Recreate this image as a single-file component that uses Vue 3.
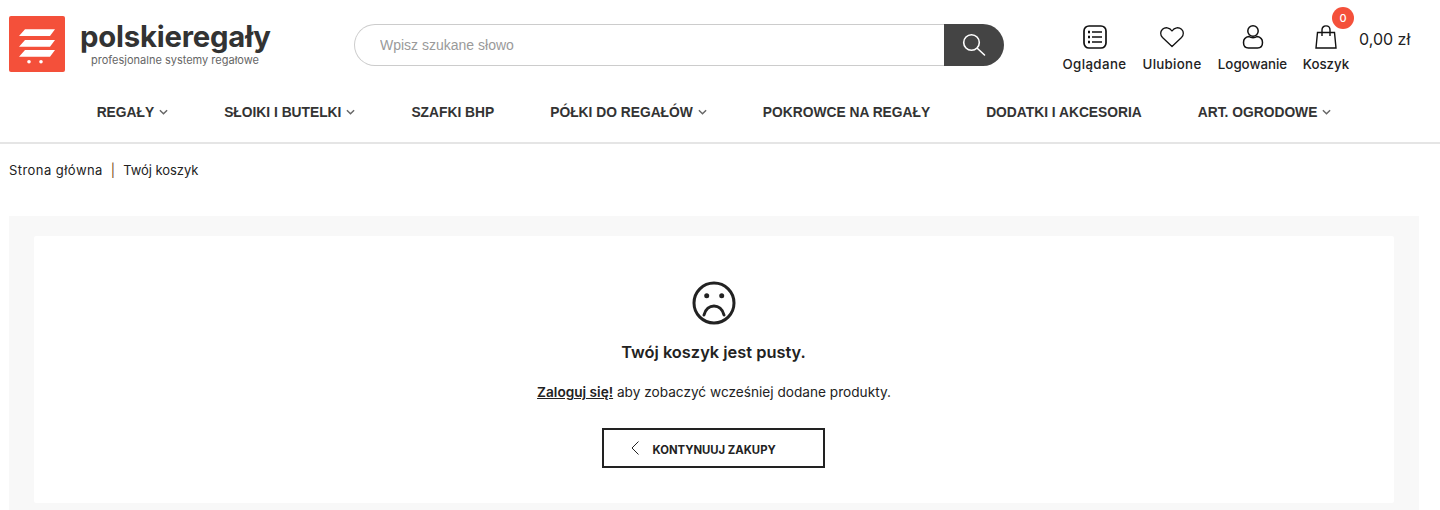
<script setup>
const navItems = [
  { label: 'Regały', arrow: true },
  { label: 'Słoiki i butelki', arrow: true },
  { label: 'Szafki BHP', arrow: false },
  { label: 'Półki do regałów', arrow: true },
  { label: 'Pokrowce na regały', arrow: false },
  { label: 'Dodatki i akcesoria', arrow: false },
  { label: 'Art. ogrodowe', arrow: true }
]
</script>

<template>
  <div class="page">
    <header class="top">
      <a class="logo">
        <svg class="logo-mark" width="56" height="56" viewBox="0 0 56 56">
          <rect width="56" height="56" rx="2" fill="#f4503a" />
          <path d="M16 13.300H46L41 20H10Z M16 24H46L41 30.700H10Z M16 34H46L41 40.700H10Z" fill="#fff" />
          <circle cx="20" cy="45.700" r="1.800" fill="#fff" />
          <circle cx="32" cy="45.700" r="1.800" fill="#fff" />
        </svg>
        <div class="logo-text">
          <div class="logo-name">polskieregały</div>
          <div class="logo-sub">profesjonalne systemy regałowe</div>
        </div>
      </a>

      <div class="search">
        <input class="search-input" placeholder="Wpisz szukane słowo" />
        <button class="search-btn">
          <svg width="24" height="24" viewBox="0 0 24 24" fill="none" stroke="#fff" stroke-width="1.600" stroke-linecap="round">
            <circle cx="9.500" cy="9.500" r="7.800" />
            <path d="M15.500 15.500L22.500 22" />
          </svg>
        </button>
      </div>

      <div class="actions">
        <a class="action seen">
          <svg width="24" height="24" viewBox="0 0 24 24" fill="none" stroke="#111" stroke-width="1.700">
            <rect x="1" y="1" width="22" height="22" rx="5" />
            <path d="M9 7H19M9 12H19M9 17H19" />
            <path d="M5 7H7M5 12H7M5 17H7" stroke-width="2.400" />
          </svg>
          <span>Oglądane</span>
        </a>
        <a class="action fav">
          <svg width="24" height="24" viewBox="0 0 24 24" fill="none" stroke="#111" stroke-width="1.300" stroke-linejoin="round">
            <path d="M12 21.500L2.500 12.500C0 10 .2 6.500 2.500 4.300C5 2 9.500 2 12 6C14.500 2 19 2 21.500 4.300C23.800 6.500 24 10 21.500 12.500Z" />
          </svg>
          <span>Ulubione</span>
        </a>
        <a class="action login">
          <svg width="24" height="24" viewBox="0 0 24 24" fill="none" stroke="#111" stroke-width="1.500">
            <circle cx="12" cy="6" r="5.200" />
            <path d="M8 11.500C10 13 14 13 16 11.500C19.500 12 21.500 14.500 21.500 17.500C21.500 21 19.500 23 16.500 23H7.500C4.500 23 2.500 21 2.500 17.500C2.500 14.500 4.500 12 8 11.500Z" />
          </svg>
          <span>Logowanie</span>
        </a>
        <a class="action cart">
          <svg width="24" height="24" viewBox="0 0 24 24" fill="none" stroke="#111" stroke-width="1.400">
            <path d="M3.500 7.500H20.500L22 23H2Z" />
            <path d="M8 11V5C8 -.5 16 -.5 16 5V11" />
          </svg>
          <span>Koszyk</span>
          <b class="badge">0</b>
        </a>
        <div class="price">0,00 zł</div>
      </div>
    </header>

    <nav class="nav">
      <a v-for="item in navItems" :key="item.label" class="nav-item">
        {{ item.label }}
        <svg v-if="item.arrow" width="9" height="6" viewBox="0 0 10 6" fill="none" stroke="#666" stroke-width="1.600">
          <path d="M1 1L5 5L9 1" />
        </svg>
      </a>
    </nav>

    <div class="crumbs">
      <a class="home">Strona główna</a>
      <i>|</i>
      <a class="here">Twój koszyk</a>
    </div>

    <main class="panel">
      <section class="card">
        <svg class="sad" width="46" height="46" viewBox="0 0 46 46" fill="none" stroke="#222" stroke-width="3">
          <circle cx="23" cy="23" r="20" />
          <path d="M13 35C16 23 30 23 33 35" stroke-linecap="round" />
          <circle cx="15.700" cy="15.700" r="2.500" fill="#222" stroke="none" />
          <circle cx="30.700" cy="15.700" r="2.500" fill="#222" stroke="none" />
        </svg>
        <h2 class="title">Twój koszyk jest pusty.</h2>
        <p class="note"><a>Zaloguj się!</a> aby zobaczyć wcześniej dodane produkty.</p>
        <a class="back">
          <svg width="8" height="14" viewBox="0 0 8 14" fill="none" stroke="#222" stroke-width="1">
            <path d="M7.500 .5L1 7L7.500 13.500" />
          </svg>
          <span>KONTYNUUJ ZAKUPY</span>
        </a>
      </section>
    </main>
  </div>
</template>

<style>
  html, body {
    margin: 0;
    background: #fff;
    overflow: hidden;
  }
</style>

<style scoped>
  .page {
    height: 510px;
    overflow: hidden;
    font-family: Inter, "Noto Sans", sans-serif;
    color: #222;
  }

  .top {
    display: flex;
    align-items: flex-start;
    padding: 16px 0 0 9px;
    height: 72px;
  }

  .logo {
    display: flex;
    gap: 15px;
    width: 345px;
    flex: none;
  }

  .logo-mark {
    flex: none;
  }

  .logo-text {
    text-align: center;
    width: 190px;
  }

  .logo-name {
    font-size: 29.300px;
    line-height: 36px;
    margin-top: 3px;
    font-weight: 700;
    color: #333;
    letter-spacing: -.2px;
    white-space: nowrap;
  }

  .logo-sub {
    font-size: 11px;
    line-height: 13px;
    color: #666;
    white-space: nowrap;
    margin-top: -1px;
  }

  .search {
    display: flex;
    width: 650px;
    height: 42px;
    margin-top: 8px;
    flex: none;
  }

  .search-input {
    flex: 1;
    min-width: 0;
    box-sizing: border-box;
    border: 1px solid #ccc;
    border-right: 0;
    border-radius: 21px 0 0 21px;
    padding: 0 25px;
    outline: 0;
    font: 14px "Liberation Sans", sans-serif;
  }

  .search-input::placeholder {
    color: #9a9a9a;
    opacity: 1;
  }

  .search-btn {
    width: 60px;
    border: 0;
    padding: 0;
    background: #444;
    border-radius: 0 21px 21px 0;
    display: flex;
    align-items: center;
    justify-content: center;
  }

  .actions {
    display: flex;
    gap: 16px;
    margin-left: 58px;
    margin-top: 9px;
  }

  .action {
    position: relative;
    display: flex;
    flex-direction: column;
    align-items: center;
    gap: 7px;
    font-size: 13.300px;
    line-height: 16px;
    font-weight: 450;
    color: #222;
    white-space: nowrap;
  }

  .seen { width: 65px; }
  .fav { width: 58px; }
  .login { width: 71px; }
  .cart { width: 44px; }

  .seen span { letter-spacing: .4px; }
  .fav span { letter-spacing: .3px; }

  .badge {
    position: absolute;
    top: -18px;
    left: 28px;
    width: 22px;
    height: 22px;
    border-radius: 50%;
    background: #f4503a;
    color: #fff;
    font-size: 11px;
    font-weight: 500;
    line-height: 22px;
    text-align: center;
  }

  .price {
    font-size: 16px;
    line-height: 28px;
    margin-left: -5px;
    color: #222;
    white-space: nowrap;
  }

  .nav {
    display: flex;
    justify-content: center;
    gap: 56px;
    height: 48px;
    padding: 0 12px 6px 0;
    align-items: center;
    border-bottom: 2px solid #e5e5e5;
  }

  .nav-item {
    display: flex;
    align-items: center;
    gap: 5px;
    font: 700 13.800px "Liberation Sans", sans-serif;
    text-transform: uppercase;
    color: #333;
    white-space: nowrap;
  }

  .crumbs {
    display: flex;
    gap: 8px;
    padding: 17px 0 0 9px;
    height: 55px;
    font-size: 13px;
    line-height: 18px;
    color: #222;
  }

  .crumbs .home {
    letter-spacing: .45px;
  }

  .crumbs .here {
    letter-spacing: -.05px;
  }

  .crumbs i {
    font-style: normal;
    color: #7a4a20;
  }

  .panel {
    margin: 0 21px 0 9px;
    padding: 20px 25px 7px;
    background: #f8f8f8;
  }

  .card {
    background: #fff;
    height: 267px;
    box-sizing: border-box;
    padding-top: 44px;
    display: flex;
    flex-direction: column;
    align-items: center;
    border-radius: 2px;
  }

  .title {
    margin: 14px 0 0;
    font-size: 16.400px;
    line-height: 24px;
    font-weight: 600;
    color: #222;
    transform: translateX(-.5px);
  }

  .note {
    margin: 18px 0 0;
    font-size: 13.650px;
    line-height: 20px;
    color: #222;
  }

  .note a {
    font-weight: 600;
    text-decoration: underline;
  }

  .back {
    margin: 26px 2px 0 0;
    width: 223px;
    height: 40px;
    box-sizing: border-box;
    border: 2px solid #222;
    display: flex;
    align-items: center;
    padding-left: 27px;
    gap: 14px;
    font-size: 11.300px;
    font-weight: 700;
  }

  .back span {
    padding-top: 3px;
  }
</style>
